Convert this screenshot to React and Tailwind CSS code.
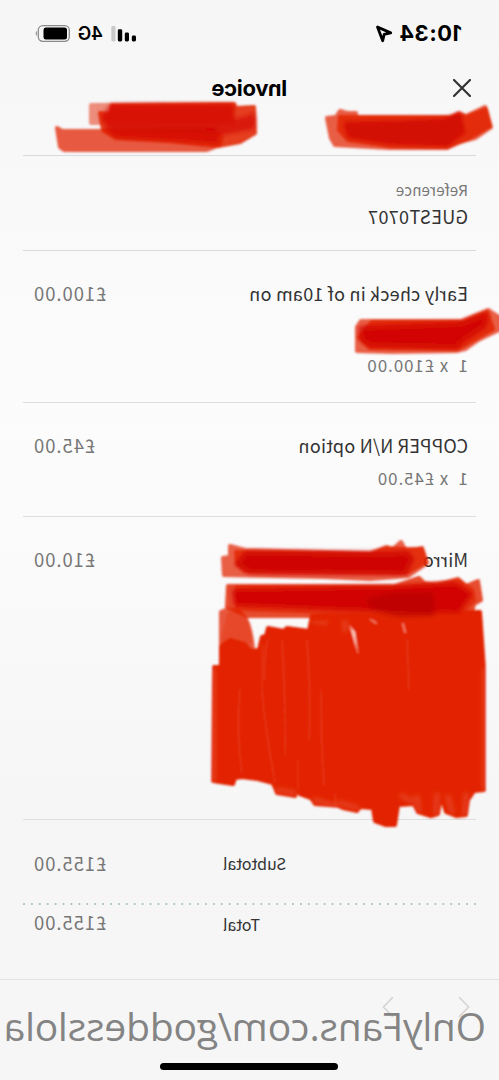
const body = "font-['Noto_Sans_CJK_JP','Noto_Sans',sans-serif]";

export default function App() {
  return (
    <div className="relative w-[499px] h-[1080px] overflow-hidden">
      <div className="flex h-full -scale-x-100 flex-col bg-linear-to-b from-[#f6f6f6] via-[#fcfcfc] via-40% to-[#f6f6f6] to-75%">
        <StatusBar />
        <Header />
        <main className={`mx-[23px] flex flex-col ${body}`}>
          <section className="h-[95px] border-b border-[#dadada] pl-2 pt-[22px]">
            <p className="text-[15px] leading-6 tracking-[0.32px] text-[#777]">Reference</p>
            <p className="mt-0.5 text-[18px] leading-6 text-[#333] tracking-[0.36px]">GUEST0707</p>
          </section>
          <LineItem className="h-[152px]" name="Early check in of 10am on" price="£100.00" quantity="1 &nbsp;x £100.00" gap="mt-12" />
          <LineItem className="h-[114px]" name="COPPER N/N option" price="£45.00" quantity="1 &nbsp;x £45.00" gap="mt-[9px]" />
          <LineItem className="h-[303px]" name="Mirro" price="£10.00" />
          <section className="text-[#333]">
            <div className="flex h-[83px] items-center justify-between pr-2.5 pt-0.5">
              <span className="w-[253px] text-right text-[16px]">Subtotal</span>
              <Price value="£155.00" />
            </div>
            <svg className="block h-0.5 w-full" viewBox="0 0 453 2">
              <line x1="1" y1="1" x2="453" y2="1" stroke="#a3c0c9" strokeWidth="2" strokeLinecap="round" strokeDasharray="0.1 7.812" />
            </svg>
            <div className="flex h-[74px] items-start justify-between pr-2.5 pt-[5px]">
              <span className="w-[253px] pt-0.5 text-right text-[16px] leading-6">Total</span>
              <Price value="£155.00" />
            </div>
          </section>
        </main>
        <Footer />
      </div>
      <Redactions />
    </div>
  );
}

function StatusBar() {
  return (
    <div className="flex h-16 items-center pl-[37px] pr-[34px] pt-[3px] font-[Inter,sans-serif] text-black">
      <span className="w-[63px] text-[22px] font-bold tracking-[0.5px]">10:34</span>
      <svg className="ml-1.5 size-[18px]" viewBox="0 0 18 18" fill="none" stroke="black" strokeWidth="2.8" strokeLinejoin="round">
        <path d="M15.5 2L2.3 7.9L8.8 9.3L10.3 15.8Z" />
      </svg>
      <svg className="ml-auto h-4 w-[26px]" viewBox="0 0 26 16">
        <rect x="1" y="9.5" width="4.2" height="6" rx="1.4" />
        <rect x="8" y="6.5" width="4.2" height="9" rx="1.4" />
        <rect x="14.8" y="3.3" width="4.4" height="12.2" rx="1.4" />
        <rect x="21.5" y="0" width="4.2" height="15.5" rx="1.4" fill="#c9c9c9" />
      </svg>
      <span className="ml-2 w-[24px] text-[18px] font-semibold tracking-[-0.3px]">4G</span>
      <svg className="ml-[9px] h-[17px] w-[36px]" viewBox="0 0 36 17">
        <rect x="0.7" y="0.7" width="31" height="15.6" rx="4.5" fill="none" stroke="#8b8b8b" strokeWidth="1.3" />
        <rect x="3" y="2.5" width="23.5" height="12" rx="2.5" />
        <path d="M33.2 5.8q2.3 2.7 0 5.4z" fill="#8b8b8b" />
      </svg>
    </div>
  );
}

function Header() {
  return (
    <header className="mx-[23px] grid h-[92px] grid-cols-[1fr_auto_1fr] items-start border-b border-[#dadada] pt-3">
      <svg className="ml-[5px] mt-[3px] size-[18px]" viewBox="0 0 18 18" fill="none" stroke="#333" strokeWidth="2.2" strokeLinecap="round">
        <path d="M1 1l16 16M17 1L1 17" />
      </svg>
      <h1 className="text-[22px] leading-6 font-bold tracking-[-0.3px] text-black font-[Inter,sans-serif]">Invoice</h1>
    </header>
  );
}

function LineItem({ className, name, price, quantity, gap }) {
  return (
    <section className={`border-b border-[#dedede] pl-2 pr-2.5 pt-[30px] ${className}`}>
      <div className="flex items-start justify-between">
        <span className="text-[18px] leading-6 tracking-[0.24px] text-[#333]">{name}</span>
        <Price value={price} />
      </div>
      {quantity && <p className={`text-[17px] leading-6 tracking-[0.9px] text-[#777] ${gap}`}>{quantity}</p>}
    </section>
  );
}

function Price({ value }) {
  return <span className="text-[18.5px] leading-6 tracking-[0.95px] text-[#777]">{value}</span>;
}

function Footer() {
  return (
    <footer className="relative flex grow flex-col border-t border-[#e2e2e2]">
      <svg className="ml-[29px] mt-[17px] h-5 w-[90px]" viewBox="0 0 90 20" fill="none" stroke="#d4d4d4" strokeWidth="1.6">
        <path d="M11 0L1.4 10L11 20M77 0l9.5 10L77 20" />
      </svg>
      <div className="absolute left-[13px] top-[19px] text-[39px] leading-[54px] tracking-[-0.2px] whitespace-nowrap text-[#848484] font-['Open_Sans',sans-serif]">
        OnlyFans.com/goddesslola
      </div>
      <div className="mx-auto mt-[46px] h-[7px] w-[178px] rounded-full bg-black" />
    </footer>
  );
}

// Marker strokes painted over the private details
function Redactions() {
  return (
    <svg className="pointer-events-none absolute inset-0" width="499" height="1080" viewBox="0 0 499 1080" strokeLinejoin="round" strokeLinecap="round" strokeWidth="4">
      <defs>
        <filter id="soft" x="0" y="0" width="499" height="1080" filterUnits="userSpaceOnUse">
          <feGaussianBlur stdDeviation="0.8" />
        </filter>
        <filter id="softer" x="0" y="0" width="499" height="1080" filterUnits="userSpaceOnUse">
          <feGaussianBlur stdDeviation="2" />
        </filter>
      </defs>
      <g fill="#e22400" stroke="#e22400" filter="url(#soft)">
        {/* header, left */}
        <path d="M57 128L62 131L205 131L222 136L220 145L207 150L64 150L60 147Z" opacity="0.74" />
        <path d="M91 105L233 104L233 122L91 123Z" opacity="0.5" />
        <path d="M112 105L234 104L236 108L254 107L255 133L240 142L218 146L170 141L116 138L103 130L100 113L110 114Z" opacity="0.88" />
        <g fill="#d00500" stroke="#d00500" filter="url(#softer)">
          <path d="M111 106L232 106V122L247 118L253 115V127L222 133L112 127L103 118Z" opacity="0.6" />
          <path d="M106 128L216 128L218 142L170 139L116 136Z" opacity="0.55" />
        </g>

        {/* header, right */}
        <path d="M327 118L336 117L340 111L347 113L356 113V117L452 117L459 113L466 116L485 107L491 127L475 138L459 142L447 148L390 148L335 145L331 138Z" opacity="0.72" />
        <path d="M340 117H450L459 114L466 117L486 109L490 126L466 140L448 147L390 146L348 140L339 130Z" opacity="0.85" />
        <path d="M346 124L400 123L445 121L459 115L463 132L447 144L390 142L350 136Z" fill="#cc0300" stroke="#cc0300" opacity="0.75" filter="url(#softer)" />

        {/* early check in */}
        <path d="M361 321H461L488 310L494 314L499 317V330L478 340L465 349L456 351L392 352L357 351L357 327Z" opacity="0.72" />
        <path d="M372 322H463L487 312L493 329L458 349L370 348L359 337Z" opacity="0.85" />
        <path d="M361 328L461 324L474 319L486 315L484 326L466 338L456 347L370 345L362 340Z" fill="#d00500" stroke="#d00500" opacity="0.8" filter="url(#softer)" />

        {/* mirror item, first line */}
        <path d="M230 546L245 550L370 553L387 547L392 550L401 542L406 551L422 548L427 563L408 576L370 579L325 577L224 575L223 558L230 557Z" opacity="0.72" />
        <path d="M236 552L372 554L386 548L404 549L422 549L426 562L406 573L245 571L237 564Z" opacity="0.8" />
        <path d="M246 553L386 554L407 553L412 559L405 573L250 572L237 564Z" fill="#cc0300" stroke="#cc0300" opacity="0.8" filter="url(#softer)" />

        {/* vertical fill strokes */}
        <path d="M221 612Q236 604 246 619Q251 629 253 649L251 700L221 700Z" opacity="0.75" />
        <path d="M229 614Q224 630 222 648L240 648L250 642Q250 625 240 612Z" opacity="0.35" />
        <path d="M221 647L230 640L244 644L251 651L259 650L262 637L266 636L268 628L284 631L287 628L309 631L312 616L480 612L484 670L484 790L474 791L468 800L466 815L456 816L446 812L441 796L438 814L431 816L418 812L414 804L398 805L395 825L386 825L375 821L373 808L360 807L357 811L343 808L338 806L315 804L311 798L300 794L297 790L295 796L277 793L273 783L258 779L242 777L235 778L233 784L213 781L214 667L221 667Z" />
        <g fill="none" stroke="#fff" strokeWidth="5" opacity="0.12" filter="url(#softer)">
          <path d="M213 670V780M485 670V788M448 797L452 812M466 795L465 813M417 797L419 810M437 795L436 813M402 796L412 801M315 800L335 806M340 803L357 808M313 620L325 622M345 622V630M277 790L294 793" />
        </g>
        <g fill="none" stroke="#f17a5f" strokeWidth="1.3" opacity="0.28">
          <path d="M240 690Q236 730 242 772M262 645V690Q265 730 275 782M282 640Q286 700 285 755M307 640Q311 700 309 740M321 690Q321 740 324 785M407 640L409 690M298 760V788M335 794L336 807M268 640Q264 650 265 680" />
        </g>
        <path d="M350 626L355 632L358 653L355 644Z" fill="#ffd9cf" stroke="#f27255" strokeWidth="1" />
        <path d="M370 619L376 623M403 624L405 632" fill="none" stroke="#f27c63" strokeWidth="2" />

        {/* mirror item, second line */}
        <path d="M228 586L395 586L407 582L419 578L424 583L437 585L458 579L466 586L478 581L481 600L474 604L472 612L460 617L400 619L324 615L324 619L312 619L310 616L247 616L227 607Z" opacity="0.82" />
        <path d="M237 587L396 587L459 581L472 590L474 600L460 614L390 614L237 609Z" opacity="0.7" />
        <g filter="url(#softer)">
          <path d="M234 591L396 588L456 585L470 594L458 611L390 610L236 604Z" fill="#d00500" stroke="#d00500" opacity="0.85" />
          <path d="M368 600L395 594L431 594L434 608L432 614L400 615L372 608Z" fill="#b40000" stroke="#b40000" opacity="0.6" />
        </g>
      </g>
    </svg>
  );
}
